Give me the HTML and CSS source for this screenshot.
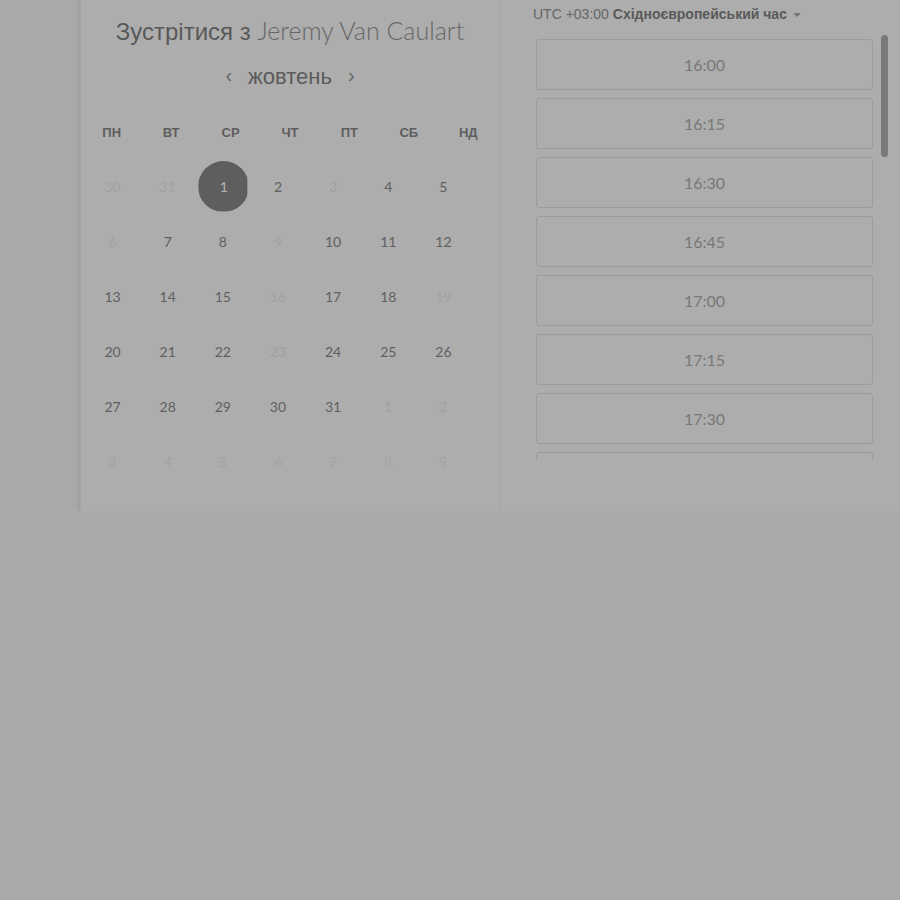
FILE: index.html
```html
<!DOCTYPE html>
<html lang="uk">
<head>
    <meta charset="UTF-8">
    <meta name="viewport" content="width=device-width, initial-scale=1.0">
    <title>Зустрітися з Jeremy Van Caulart</title>
    <link rel="stylesheet" href="styles.css">
</head>
<body>
    <div class="booking">
        <div class="calendar">
            <h1 class="title">Зустрітися з <span class="host">Jeremy Van Caulart</span></h1>
            <div class="month">
                <span class="arrow">&lsaquo;</span>
                <span class="month-name">жовтень</span>
                <span class="arrow">&rsaquo;</span>
            </div>
            <div class="weekdays">
                <span>ПН</span><span>ВТ</span><span>СР</span><span>ЧТ</span><span>ПТ</span><span>СБ</span><span>НД</span>
            </div>
            <div class="days">
                <span class="day muted">30</span><span class="day muted">31</span><span class="day selected"><i>1</i></span><span class="day">2</span><span class="day muted">3</span><span class="day">4</span><span class="day">5</span>
                <span class="day muted">6</span><span class="day">7</span><span class="day">8</span><span class="day muted">9</span><span class="day">10</span><span class="day">11</span><span class="day">12</span>
                <span class="day">13</span><span class="day">14</span><span class="day">15</span><span class="day muted">16</span><span class="day">17</span><span class="day">18</span><span class="day muted">19</span>
                <span class="day">20</span><span class="day">21</span><span class="day">22</span><span class="day muted">23</span><span class="day">24</span><span class="day">25</span><span class="day">26</span>
                <span class="day">27</span><span class="day">28</span><span class="day">29</span><span class="day">30</span><span class="day">31</span><span class="day muted">1</span><span class="day muted">2</span>
                <span class="day faded">3</span><span class="day faded">4</span><span class="day faded">5</span><span class="day faded">6</span><span class="day faded">7</span><span class="day faded">8</span><span class="day faded">9</span>
            </div>
        </div>

        <div class="times">
            <div class="timezone">UTC +03:00 <b>Східноєвропейський час</b> <span class="caret"></span></div>
            <div class="slots">
                <button class="slot">16:00</button>
                <button class="slot">16:15</button>
                <button class="slot">16:30</button>
                <button class="slot">16:45</button>
                <button class="slot">17:00</button>
                <button class="slot">17:15</button>
                <button class="slot">17:30</button>
                <button class="slot"></button>
            </div>
            <div class="scroll-thumb"></div>
        </div>
    </div>
</body>
</html>
```

FILE: styles.css
```css
body {
    margin: 0;
    padding: 0;
    background-color: #a9a9a9;
    font-family: "Liberation Sans", Arial, sans-serif;
    color: #5d5d5d;
}

.booking {
    display: flex;
    margin-left: 80px;
    width: 820px;
    height: 511px;
    background-color: #adadad;
    box-shadow: 0 1px 6px rgba(0, 0, 0, 0.12);
}

.calendar {
    width: 420px;
    border-right: 1px solid #a5a5a5;
    border-left: 1px solid #a6a6a6;
    box-sizing: border-box;
}

.title {
    margin: 14px 0 0;
    font-size: 24px;
    font-weight: normal;
    line-height: 32px;
    text-align: center;
    color: #595959;
}

.host {
    font-family: Lato, "Noto Sans", sans-serif;
    font-weight: 300;
    font-size: 25px;
    color: #666;
}

.month {
    margin-top: 14px;
    display: flex;
    justify-content: center;
    align-items: center;
    gap: 16px;
    line-height: 30px;
    font-size: 22px;
    color: #5b5b5b;
}

.arrow {
    font-size: 20px;
    color: #666;
    position: relative;
    top: -2px;
}

.weekdays {
    margin-top: 31px;
    display: grid;
    grid-template-columns: repeat(7, 1fr);
    padding: 0 1px;
    line-height: 20px;
    font-size: 13px;
    font-weight: bold;
    text-align: center;
    color: #5e5e5e;
}

.days {
    margin: 16px 0 0 4px;
    width: 386px;
    display: grid;
    grid-template-columns: repeat(7, 1fr);
    grid-auto-rows: 55px;
    font-family: Lato, "Noto Sans", sans-serif;
    font-size: 14px;
}

.day {
    display: flex;
    align-items: center;
    justify-content: center;
    color: #5f5f5f;
}

.day.muted {
    color: #a1a1a1;
}

.day.faded {
    color: #a3a3a3;
}

.day.selected i {
    font-style: normal;
    display: flex;
    align-items: center;
    justify-content: center;
    width: 51px;
    height: 51px;
    margin: -1px 0 0 2px;
    border-radius: 50%;
    background-color: #5e5e5e;
    color: #b5b5b5;
    clip-path: inset(0 2px 0 0);
}

.times {
    flex: 1;
    display: flex;
    flex-direction: column;
    position: relative;
}

.timezone {
    margin: 5px 0 0 33px;
    line-height: 18px;
    font-size: 14px;
    color: #666;
}

.timezone b {
    color: #5a5a5a;
}

.caret {
    display: inline-block;
    margin-left: 2px;
    border-left: 4px solid transparent;
    border-right: 4px solid transparent;
    border-top: 4px solid #777;
    vertical-align: middle;
}

.slots {
    margin: 16px 0 0 36px;
    height: 421px;
    overflow: hidden;
    display: flex;
    flex-direction: column;
    gap: 8px;
}

.slot {
    flex: none;
    width: 337px;
    height: 51px;
    border: 1px solid #9c9c9c;
    border-radius: 3px;
    background: transparent;
    font-family: Lato, "Noto Sans", sans-serif;
    font-size: 16px;
    color: #787878;
    cursor: pointer;
}

.scroll-thumb {
    position: absolute;
    left: 381px;
    top: 35px;
    width: 7px;
    height: 122px;
    border-radius: 4px;
    background-color: #7a7a7a;
}
```
